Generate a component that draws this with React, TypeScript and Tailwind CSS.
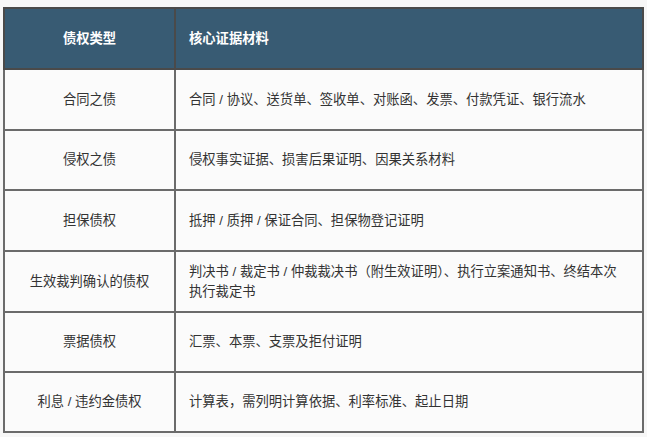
import * as React from "react";

const rows: { type: string; lines: string[]; h: string }[] = [
  { type: "合同之债", h: "h-[61px]", lines: ["合同 / 协议、送货单、签收单、对账函、发票、付款凭证、银行流水"] },
  { type: "侵权之债", h: "h-[60px]", lines: ["侵权事实证据、损害后果证明、因果关系材料"] },
  { type: "担保债权", h: "h-[61px]", lines: ["抵押 / 质押 / 保证合同、担保物登记证明"] },
  {
    type: "生效裁判确认的债权",
    h: "h-[61px]",
    lines: ["判决书 / 裁定书 / 仲裁裁决书（附生效证明）、执行立案通知书、终结本次", "执行裁定书"],
  },
  { type: "票据债权", h: "h-[60px]", lines: ["汇票、本票、支票及拒付证明"] },
  { type: "利息 / 违约金债权", h: "h-[60px]", lines: ["计算表，需列明计算依据、利率标准、起止日期"] },
];

export default function App() {
  return (
    <div
      className="w-[647px] h-[437px] bg-[#f7f7f7] pt-[7px] pl-[3px]"
      style={{ fontFamily: '"Liberation Sans", "Noto Sans CJK SC", sans-serif' }}
    >
      <table className="w-[641px] border-collapse border-2 border-[#6b6b6b] text-[13.3px] text-[#333]">
        <thead>
          <tr className="h-[61px] bg-[#385b73] text-white font-bold">
            <th className="w-[171px] border-2 border-[#4a4a4a] text-center">债权类型</th>
            <th className="border-2 border-[#4a4a4a] text-left px-[13px]">核心证据材料</th>
          </tr>
        </thead>
        <tbody>
          {rows.map((r) => (
            <tr key={r.type} className={`${r.h} bg-[#fbfbfb]`}>
              <td className="border-2 border-[#6b6b6b] text-center">{r.type}</td>
              <td className="border-2 border-[#6b6b6b] px-[13px] leading-[20px]">
                {r.lines.map((l) => (
                  <div key={l}>{l}</div>
                ))}
              </td>
            </tr>
          ))}
        </tbody>
      </table>
    </div>
  );
}
